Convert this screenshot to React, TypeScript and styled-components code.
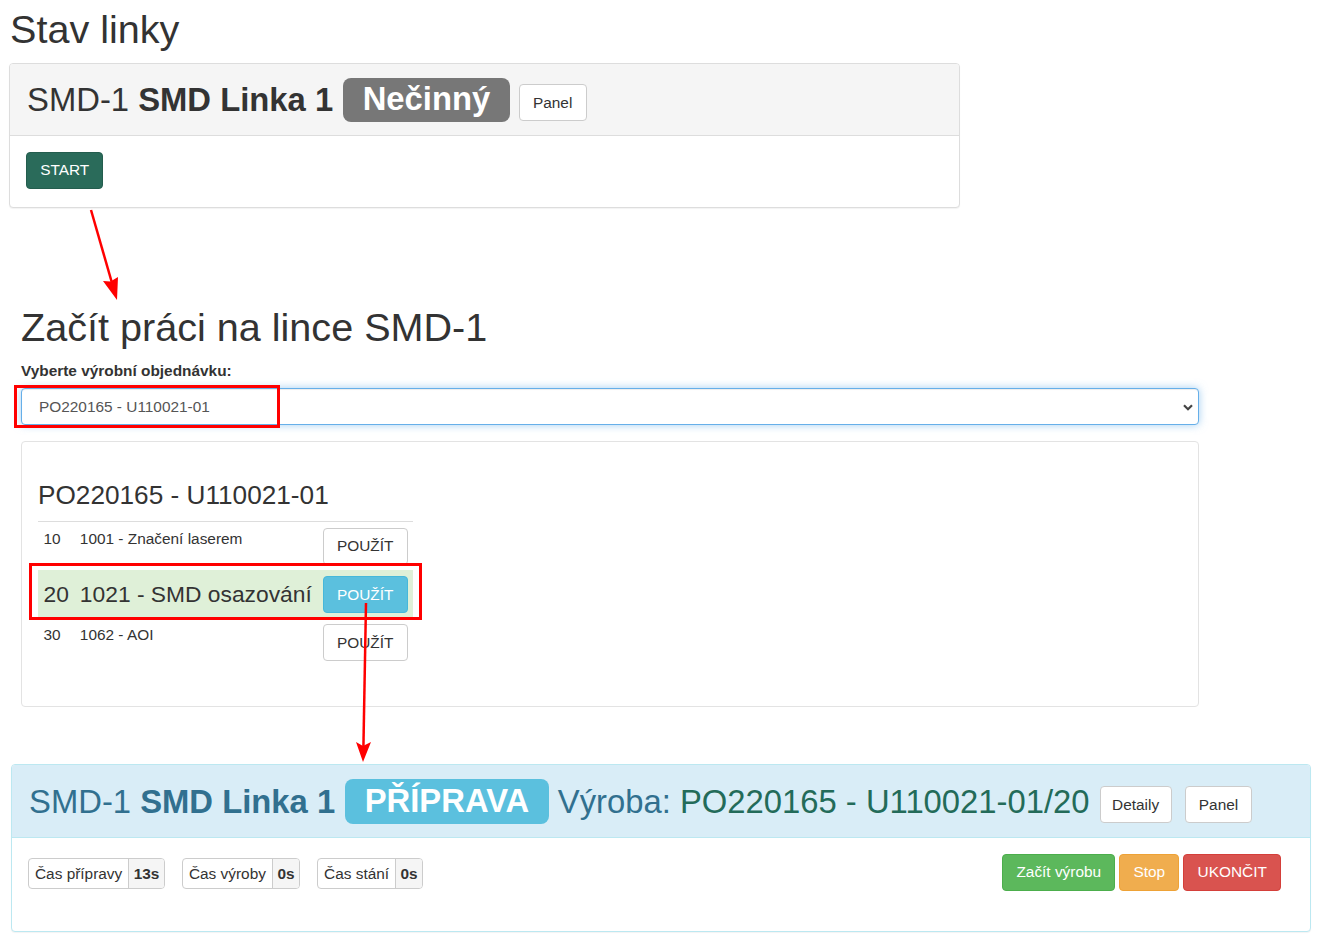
import React from "react";
import styled, { createGlobalStyle, css } from "styled-components";

const GlobalStyle = createGlobalStyle`
  html, body { margin: 0; padding: 0; background: #fff; }
  body {
    font-family: "Liberation Sans", Arial, Helvetica, sans-serif;
    font-size: 15.4px;
    line-height: 1.42857;
    color: #333;
  }
  *, *::before, *::after { box-sizing: border-box; }
`;

const Page = styled.div`
  position: relative;
  width: 1321px;
  height: 937px;
  overflow: hidden;
  padding-top: 8px;
  display: flex;
  flex-direction: column;
  align-items: flex-start;
`;

const PageTitle = styled.h1<{ $left: number; $top: number }>`
  margin: ${(p) => p.$top}px 0 0 ${(p) => p.$left}px;
  font-size: 39.6px;
  font-weight: 400;
  line-height: 1.1;
  color: #333;
`;

type PanelVariant = "default" | "info";

const panelColors = {
  default: { border: "#dddddd", head: "#f5f5f5", text: "#333333" },
  info: { border: "#bce8f1", head: "#d9edf7", text: "#31708f" },
};

const Panel = styled.section<{ $variant: PanelVariant; $width: number; $left: number; $top: number }>`
  width: ${(p) => p.$width}px;
  margin: ${(p) => p.$top}px 0 0 ${(p) => p.$left}px;
  background: #fff;
  border: 1px solid ${(p) => panelColors[p.$variant].border};
  border-radius: 4px;
  box-shadow: 0 1px 1px rgba(0, 0, 0, 0.05);
`;

const PanelHeading = styled.div<{ $variant: PanelVariant }>`
  display: flex;
  align-items: center;
  padding: 14px 17px 13px;
  background: ${(p) => panelColors[p.$variant].head};
  border-bottom: 1px solid ${(p) => panelColors[p.$variant].border};
  border-radius: 3px 3px 0 0;
  color: ${(p) => panelColors[p.$variant].text};
`;

const LineTitle = styled.h2`
  margin: 0 10px 0 0;
  font-size: 32.8px;
  font-weight: 400;
  line-height: 1.1;
  color: inherit;
  white-space: nowrap;
  b { font-weight: 700; }
`;

const Production = styled.h2`
  margin: 0 10px 0 9px;
  font-size: 32.8px;
  font-weight: 400;
  line-height: 1.1;
  color: #31708f;
  white-space: nowrap;
`;

const OrderRef = styled.span`
  color: #236b59;
`;

const StatusLabel = styled.span<{ $bg: string }>`
  display: inline-block;
  font-size: 32.8px;
  font-weight: 700;
  line-height: 1;
  padding: 5.5px 19.5px 6px;
  border-radius: 8px;
  color: #fff;
  background: ${(p) => p.$bg};
  white-space: nowrap;
`;

type BtnVariant = "default" | "start" | "info" | "success" | "warning" | "danger";

const btnColors: Record<BtnVariant, { bg: string; border: string; color: string }> = {
  default: { bg: "#ffffff", border: "#cccccc", color: "#333333" },
  start: { bg: "#2a6b5a", border: "#245d4e", color: "#ffffff" },
  info: { bg: "#5bc0de", border: "#46b8da", color: "#ffffff" },
  success: { bg: "#5cb85c", border: "#4cae4c", color: "#ffffff" },
  warning: { bg: "#f0ad4e", border: "#eea236", color: "#ffffff" },
  danger: { bg: "#d9534f", border: "#d43f3a", color: "#ffffff" },
};

const Button = styled.button<{ $variant: BtnVariant; $gap?: number; $drop?: number; $padX?: number }>`
  display: inline-block;
  margin-left: ${(p) => p.$gap ?? 0}px;
  margin-top: ${(p) => p.$drop ?? 0}px;
  font-family: inherit;
  font-size: 15.4px;
  line-height: 1.42857;
  padding: 6.5px ${(p) => p.$padX ?? 13.2}px;
  border-radius: 4px;
  cursor: pointer;
  white-space: nowrap;
  ${(p) => css`
    background: ${btnColors[p.$variant].bg};
    border: 1px solid ${btnColors[p.$variant].border};
    color: ${btnColors[p.$variant].color};
  `}
`;

const PanelBody = styled.div`
  padding: 16px 16px 18px;
`;

const Section = styled.section<{ $left: number; $top: number; $width: number }>`
  width: ${(p) => p.$width}px;
  margin: ${(p) => p.$top}px 0 0 ${(p) => p.$left}px;
`;

const FieldLabel = styled.label`
  display: block;
  margin: 11px 0 6px;
  font-weight: 700;
`;

const SelectWrap = styled.div`
  position: relative;
`;

const Select = styled.select`
  display: block;
  width: 100%;
  height: 37px;
  padding: 0 30px 0 17px;
  font-family: inherit;
  font-size: 15.4px;
  color: #555;
  background: #fff;
  border: 1px solid #66afe9;
  border-radius: 4px;
  box-shadow: inset 0 1px 1px rgba(0, 0, 0, 0.075), 0 0 8px rgba(102, 175, 233, 0.6);
  appearance: none;
  -webkit-appearance: none;
  outline: none;
`;

const Chevron = styled.svg`
  position: absolute;
  right: 6px;
  top: 16px;
  pointer-events: none;
`;

const Card = styled.div`
  margin-top: 16px;
  height: 266px;
  padding: 16px 16px 19px;
  border: 1px solid #e3e3e3;
  border-radius: 4px;
`;

const OrderTitle = styled.h3`
  margin: 23px 0 11px;
  font-size: 26.2px;
  font-weight: 400;
  line-height: 1.1;
`;

const OpTable = styled.table`
  border-collapse: collapse;
  border-top: 1px solid #ddd;
`;

const OpRow = styled.tr<{ $active?: boolean }>`
  td {
    padding: 5.5px;
    vertical-align: top;
    white-space: nowrap;
    ${(p) =>
      p.$active &&
      css`
        background: #dff0d8;
        font-size: 22.8px;
        vertical-align: middle;
      `}
  }
`;

const BodyRow = styled.div`
  display: flex;
  justify-content: space-between;
  align-items: center;
  padding: 16px 29px 40px 16px;
`;

const PillGroup = styled.div`
  display: flex;
  gap: 17px;
  margin-top: 2px;
`;

const Pill = styled.span`
  display: inline-flex;
  height: 31px;
  border: 1px solid #ccc;
  border-radius: 4px;
  overflow: hidden;
  line-height: 23px;
`;

const PillKey = styled.span`
  padding: 3px 6px;
`;

const PillValue = styled.span`
  padding: 3px 4.5px;
  font-weight: 700;
  background: #f5f5f5;
  border-left: 1px solid #ccc;
`;

const Actions = styled.div`
  display: flex;
  gap: 4px;
`;

const Overlay = styled.svg`
  position: absolute;
  left: 0;
  top: 0;
  pointer-events: none;
`;

const ops = [
  { no: "10", name: "1001 - Značení laserem", active: false },
  { no: "20", name: "1021 - SMD osazování", active: true },
  { no: "30", name: "1062 - AOI", active: false },
];

const times = [
  { k: "Čas přípravy", v: "13s" },
  { k: "Čas výroby", v: "0s" },
  { k: "Čas stání", v: "0s" },
];

export default function App() {
  return (
    <>
      <GlobalStyle />
      <Page>
        <PageTitle $left={10} $top={0}>Stav linky</PageTitle>

        <Panel $variant="default" $width={951} $left={9} $top={11}>
          <PanelHeading $variant="default">
            <LineTitle>
              SMD-1 <b>SMD Linka 1</b>
            </LineTitle>
            <StatusLabel $bg="#777777">Nečinný</StatusLabel>
            <Button $variant="default" $gap={9} $drop={6}>Panel</Button>
          </PanelHeading>
          <PanelBody>
            <Button $variant="start">START</Button>
          </PanelBody>
        </Panel>

        <Section $left={21} $top={98} $width={1178}>
          <PageTitle $left={0} $top={0}>Začít práci na lince SMD-1</PageTitle>
          <FieldLabel htmlFor="po">Vyberte výrobní objednávku:</FieldLabel>
          <SelectWrap>
            <Select id="po" defaultValue="PO220165 - U110021-01">
              <option>PO220165 - U110021-01</option>
            </Select>
            <Chevron width="10" height="7" viewBox="0 0 10 7">
              <path d="M1 1.2 L5 5.2 L9 1.2" fill="none" stroke="#444" strokeWidth="2.2" />
            </Chevron>
          </SelectWrap>
          <Card>
            <OrderTitle>PO220165 - U110021-01</OrderTitle>
            <OpTable>
              <tbody>
                {ops.map((o) => (
                  <OpRow key={o.no} $active={o.active}>
                    <td>{o.no}</td>
                    <td>{o.name}</td>
                    <td>
                      <Button $variant={o.active ? "info" : "default"}>POUŽÍT</Button>
                    </td>
                  </OpRow>
                ))}
              </tbody>
            </OpTable>
          </Card>
        </Section>

        <Panel $variant="info" $width={1300} $left={11} $top={57}>
          <PanelHeading $variant="info">
            <LineTitle>
              SMD-1 <b>SMD Linka 1</b>
            </LineTitle>
            <StatusLabel $bg="#5bc0de">PŘÍPRAVA</StatusLabel>
            <Production>
              Výroba: <OrderRef>PO220165 - U110021-01/20</OrderRef>
            </Production>
            <Button $variant="default" $drop={6} $padX={11.5}>Detaily</Button>
            <Button $variant="default" $gap={13} $drop={6}>Panel</Button>
          </PanelHeading>
          <BodyRow>
            <PillGroup>
              {times.map((t) => (
                <Pill key={t.k}>
                  <PillKey>{t.k}</PillKey>
                  <PillValue>{t.v}</PillValue>
                </Pill>
              ))}
            </PillGroup>
            <Actions>
              <Button $variant="success">Začít výrobu</Button>
              <Button $variant="warning">Stop</Button>
              <Button $variant="danger">UKONČIT</Button>
            </Actions>
          </BodyRow>
        </Panel>

        <Overlay width="1321" height="937" viewBox="0 0 1321 937">
          <g stroke="#ff0000" fill="none">
            <line x1="91" y1="210" x2="112" y2="283" strokeWidth="2.5" />
            <line x1="366" y1="603" x2="363.4" y2="748" strokeWidth="2.5" />
            <rect x="15.5" y="386.5" width="263" height="40" strokeWidth="3" />
            <rect x="30.5" y="564.5" width="390" height="54" strokeWidth="3" />
          </g>
          <g fill="#ff0000">
            <polygon points="117,300 103,281 110.5,281.5 118,277" />
            <polygon points="363,762 356,742 363,746 371,742" />
          </g>
        </Overlay>
      </Page>
    </>
  );
}
